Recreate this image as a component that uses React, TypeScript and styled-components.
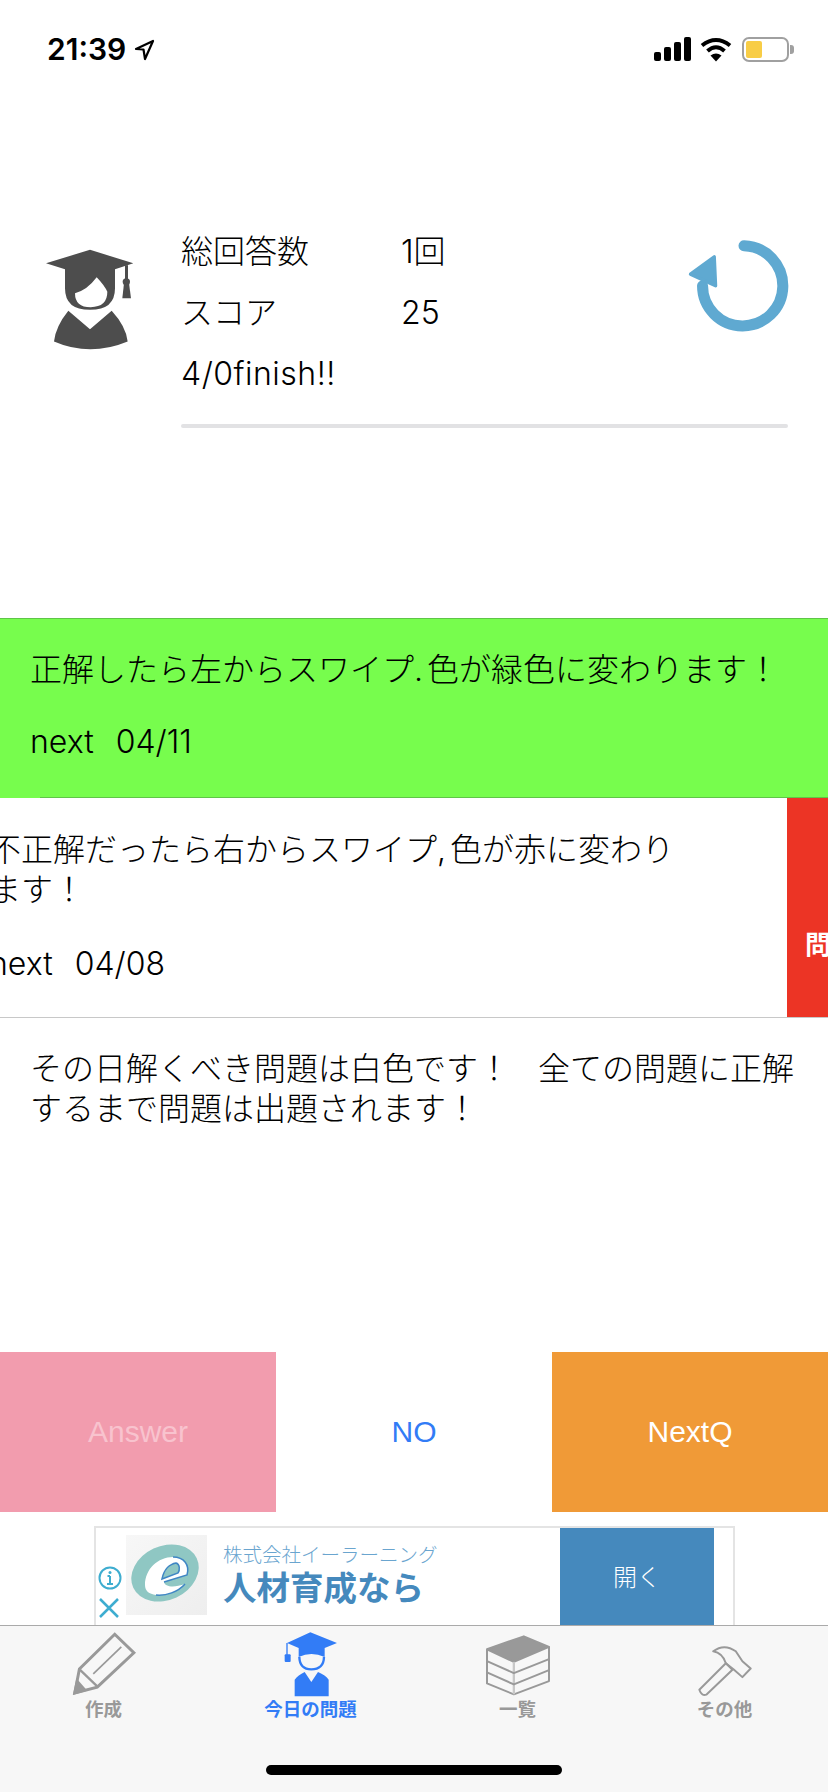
import React from 'react';
import styled, { createGlobalStyle } from 'styled-components';

const GlobalStyle = createGlobalStyle`
  html, body {
    margin: 0;
    padding: 0;
    background: #fff;
  }
  * {
    box-sizing: border-box;
  }
`;

const Screen = styled.div`
  width: 828px;
  height: 1792px;
  display: flex;
  flex-direction: column;
  overflow: hidden;
  background: #fff;
  color: #000;
  font-family: "Liberation Sans", "Noto Sans CJK JP", sans-serif;
`;

/* status bar */
const StatusBar = styled.div`
  height: 100px;
  flex: none;
  padding: 37px 39px 0 47px;
  display: flex;
  align-items: flex-start;
`;

const Clock = styled.div`
  font-family: Inter, "Liberation Sans", sans-serif;
  font-size: 30px;
  line-height: 25px;
  font-weight: 600;
`;

const LocationArrow = styled.svg`
  width: 21px;
  height: 22px;
  margin: 2px 0 0 8px;
`;

const StatusIcons = styled.div`
  margin-left: auto;
  display: flex;
  align-items: flex-start;
`;

const Battery = styled.div`
  position: relative;
  width: 47px;
  height: 25px;
  margin-left: 10px;
  border: 2px solid #a0a0a0;
  border-radius: 7px;
  padding: 2px;

  &::after {
    content: '';
    position: absolute;
    right: -7px;
    top: 6px;
    width: 4px;
    height: 9px;
    border-radius: 0 3px 3px 0;
    background: #a0a0a0;
  }
`;

const BatteryLevel = styled.div`
  width: 16px;
  height: 100%;
  border-radius: 2px;
  background: #f8cd46;
`;

/* summary */
const Summary = styled.section`
  flex: none;
  margin-top: 120px;
  height: 208px;
  padding-left: 45px;
  display: flex;
  align-items: flex-start;
`;

const AvatarBox = styled.div`
  width: 136px;
  flex: none;
  padding-top: 28px;
`;

const StatsColumn = styled.div`
  width: 607px;
  flex: none;
`;

const StatsHead = styled.div`
  height: 204px;
  position: relative;
  padding-top: 1px;
`;

const StatRow = styled.div<{ $spaced?: boolean }>`
  height: 61px;
  display: flex;
  align-items: center;
  font-family: Inter, "Noto Sans CJK JP", sans-serif;
  font-size: 32px;
  line-height: 40px;
  font-weight: 300;
  letter-spacing: ${props => (props.$spaced ? '0.5px' : '0')};
`;

const StatLabel = styled.div`
  width: 220px;
`;

const ReloadIcon = styled.svg`
  position: absolute;
  right: -3px;
  top: 19px;
  width: 104px;
  height: 97px;
`;

const Divider = styled.div`
  height: 4px;
  border-radius: 2px;
  background: #e2e2e4;
`;

/* question list */
const List = styled.section`
  flex: 1;
  margin-top: 190px;
  display: flex;
  flex-direction: column;
`;

const GreenRow = styled.div`
  position: relative;
  flex: none;
  background: #77fd4d;
  border-top: 1px solid #5fc548;
  padding: 31px 30px 36px;

  &::after {
    content: '';
    position: absolute;
    left: 40px;
    right: 0;
    bottom: 0;
    height: 1px;
    background: #5fc548;
  }
`;

const SwipedRow = styled.div`
  flex: none;
  display: flex;
  overflow: hidden;
  border-bottom: 1px solid #c8c8c8;
`;

const SwipedContent = styled.div`
  width: 828px;
  flex: none;
  margin-left: -41px;
  padding: 32px 100px 33px 30px;
`;

const DeleteAction = styled.div`
  width: 41px;
  flex: none;
  background: #ec3425;
  color: #fff;
  font-size: 26px;
  font-weight: 700;
  line-height: 30px;
  white-space: nowrap;
  overflow: hidden;
  padding: 132px 0 0 18px;
`;

const PlainRow = styled.div`
  flex: 1;
  padding: 31px 20px 0 30px;
`;

const RowText = styled.div`
  font-family: Inter, "Noto Sans CJK JP", sans-serif;
  font-size: 32px;
  line-height: 40px;
  font-weight: 300;
  word-spacing: -5px;
`;

const WideSpace = styled.span`
  letter-spacing: -4px;
`;

const NextDate = styled.div<{ $gap?: number }>`
  margin-top: ${props => props.$gap ?? 32}px;
  font-family: Inter, "Noto Sans CJK JP", sans-serif;
  font-size: 32px;
  line-height: 40px;
  font-weight: 300;
  word-spacing: 2px;
  white-space: pre;
`;

/* answer buttons */
const ButtonBar = styled.div`
  flex: none;
  height: 160px;
  display: grid;
  grid-template-columns: repeat(3, 1fr);
`;

const ActionButton = styled.button<{ $bg: string; $fg: string }>`
  border: none;
  margin: 0;
  padding: 0;
  background: ${props => props.$bg};
  color: ${props => props.$fg};
  font-family: inherit;
  font-size: 30px;
  font-weight: 300;
`;

/* ad banner */
const AdBanner = styled.div`
  flex: none;
  width: 641px;
  height: 99px;
  margin: 14px 0 0 94px;
  border: 2px solid #e4e4e4;
  border-bottom: none;
  display: flex;
  align-items: stretch;
`;

const AdControls = styled.div`
  width: 30px;
  flex: none;
  padding: 38px 0 0 2px;
  display: flex;
  flex-direction: column;
  gap: 8px;
`;

const AdLogo = styled.div`
  width: 81px;
  height: 80px;
  flex: none;
  margin-top: 7px;
  background: linear-gradient(135deg, #f7f7f7, #eeeeee);
`;

const AdCopy = styled.div`
  flex: 1;
  padding: 15px 0 0 16px;
`;

const AdCompany = styled.div`
  font-size: 19.5px;
  line-height: 24px;
  font-weight: 300;
  color: #6aa5cf;
  white-space: nowrap;
`;

const AdHeadline = styled.div`
  margin-top: 2px;
  font-size: 33.5px;
  line-height: 40px;
  font-weight: 700;
  color: #4589bd;
  white-space: nowrap;
`;

const AdButton = styled.div`
  width: 154px;
  flex: none;
  margin-right: 19px;
  padding-bottom: 3px;
  background: #4589bd;
  color: #fff;
  font-size: 24px;
  font-weight: 300;
  display: flex;
  align-items: center;
  justify-content: center;
`;

/* tab bar */
const TabBar = styled.nav`
  position: relative;
  flex: none;
  height: 167px;
  background: #f7f7f7;
  border-top: 1px solid #aaaaaa;
  padding-top: 4px;
  display: grid;
  grid-template-columns: repeat(4, 207px);
  align-items: start;
`;

const TabItem = styled.div<{ $active?: boolean }>`
  display: flex;
  flex-direction: column;
  align-items: center;
  color: ${props => (props.$active ? '#327cf6' : '#999999')};
`;

const TabIconBox = styled.div`
  height: 67px;
  display: flex;
  align-items: flex-end;
  justify-content: center;
`;

const TabLabel = styled.div`
  margin-top: 2px;
  font-size: 18.5px;
  line-height: 22px;
  font-weight: 700;
`;

const HomeIndicator = styled.div`
  position: absolute;
  left: 266px;
  bottom: 17px;
  width: 296px;
  height: 10px;
  border-radius: 5px;
  background: #000;
`;

const tabs = [
  {
    label: '作成',
    box: '210 62 205 200',
    width: 68,
    height: 66,
    art: (
      <g fill="none" stroke="currentColor" strokeWidth="9">
        <path d="M345 72 L403 128 L292 232 L224 250 L238 177 Z" strokeLinejoin="miter" />
        <path d="M280 192 L365 110" strokeWidth="5" />
        <path d="M240 180 L292 230" strokeWidth="7" />
        <path d="M218 256 L229 205 L262 243 Z" fill="currentColor" stroke="none" />
      </g>
    ),
  },
  {
    label: '今日の問題',
    active: true,
    box: '850 62 165 198',
    width: 55,
    height: 66,
    art: (
      <g fill="currentColor">
        <path d="M862 98 L932 66 L1012 98 L975 113 L975 140 Q935 122 897 140 L897 113 Z" />
        <path d="M862 98 L862 135" stroke="currentColor" strokeWidth="4" />
        <rect x="855" y="132" width="18" height="23" rx="3" />
        <path d="M899 140 Q900 177 935 177 Q972 177 973 140" fill="none" stroke="currentColor" strokeWidth="7" />
        <path d="M885 258 L885 208 Q895 195 915 185 L935 215 L955 185 Q978 195 987 208 L987 258 Z" />
      </g>
    ),
  },
  {
    label: '一覧',
    box: '210 66 205 190',
    width: 68,
    height: 63,
    art: (
      <g fill="none" stroke="currentColor" strokeWidth="6" strokeLinejoin="round">
        <path d="M219 112 L330 73 L406 105 L300 150 Z" fill="currentColor" />
        <path d="M219 112 L219 215 L300 248 L406 208 L406 105" />
        <path d="M300 150 L300 248" stroke="#c8c8c8" strokeWidth="7" />
        <path d="M219 148 L300 184 L406 142" />
        <path d="M219 182 L300 218 L406 175" />
      </g>
    ),
  },
  {
    label: 'その他',
    box: '845 108 175 160',
    width: 58,
    height: 53,
    art: (
      <g fill="none" stroke="currentColor" strokeWidth="6" strokeLinejoin="round">
        <path d="M855 246 L935 166 L955 186 L876 261 Q862 266 855 246 Z" />
        <path d="M897 130 Q930 105 965 130 L985 160 L1010 182 L985 208 L958 184 L935 166 Q925 135 897 130 Z" />
      </g>
    ),
  },
];

const App: React.FC = () => {
  return (
    <Screen>
      <GlobalStyle />
      <StatusBar>
        <Clock>21:39</Clock>
        <LocationArrow viewBox="0 0 21 22">
          <path d="M2 10 L19 2 L11 20 L9.500 10.500 Z" fill="none" stroke="#000" strokeWidth="2.200" strokeLinejoin="round" />
        </LocationArrow>
        <StatusIcons>
          <svg width="37" height="24" viewBox="0 0 37 24" fill="#000">
            <rect x="0" y="15" width="7" height="9" rx="2" />
            <rect x="10" y="10" width="7" height="14" rx="2" />
            <rect x="20" y="5" width="7" height="19" rx="2" />
            <rect x="30" y="0" width="7" height="24" rx="2" />
          </svg>
          <svg width="32" height="25" viewBox="0 0 32 25" style={{ marginLeft: 9 }} fill="none" stroke="#000" strokeWidth="4">
            <path d="M2 8.500 Q16 -2.500 30 8.500" />
            <path d="M7.500 14 Q16 6.500 24.500 14" />
            <path d="M16 24.500 L10.500 18.500 Q16 14.500 21.500 18.500 Z" fill="#000" stroke="none" />
          </svg>
          <Battery>
            <BatteryLevel />
          </Battery>
        </StatusIcons>
      </StatusBar>

      <Summary>
        <AvatarBox>
          <svg width="90" height="102" viewBox="45 55 270 305" fill="#4d4d4d">
            <path d="M48 100 L180 60 L310 100 L255 118 L255 175 Q255 240 180 240 Q105 240 105 175 L105 118 Z" />
            <path d="M135 190 Q172 180 200 142 Q225 168 232 186 Q232 232 182 232 Q135 232 135 190 Z" fill="#fff" />
            <path d="M115 243 L180 298 L245 243 Q288 290 293 335 Q180 382 72 335 Q77 290 115 243 Z" />
            <rect x="285" y="106" width="9" height="50" />
            <circle cx="289" cy="156" r="11" />
            <path d="M282 160 L297 160 L303 205 L277 205 Z" />
          </svg>
        </AvatarBox>
        <StatsColumn>
          <StatsHead>
            <StatRow>
              <StatLabel>総回答数</StatLabel>
              <div>1回</div>
            </StatRow>
            <StatRow>
              <StatLabel>スコア</StatLabel>
              <div>25</div>
            </StatRow>
            <StatRow $spaced>4/0finish!!</StatRow>
            <ReloadIcon viewBox="50 40 310 290">
              <path d="M220 60 A120 120 0 1 1 96 180" fill="none" stroke="#5fa9d1" strokeWidth="33" strokeLinecap="round" />
              <path d="M60 145 L131 93 L135 180 Z" fill="#5fa9d1" stroke="#5fa9d1" strokeWidth="10" strokeLinejoin="round" />
            </ReloadIcon>
          </StatsHead>
          <Divider />
        </StatsColumn>
      </Summary>

      <List>
        <GreenRow>
          <RowText>正解したら左からスワイプ. 色が緑色に変わります！</RowText>
          <NextDate>next  04/11</NextDate>
        </GreenRow>
        <SwipedRow>
          <SwipedContent>
            <RowText>不正解だったら右からスワイプ, 色が赤に変わります！</RowText>
            <NextDate $gap={34}>next  04/08</NextDate>
          </SwipedContent>
          <DeleteAction>問題</DeleteAction>
        </SwipedRow>
        <PlainRow>
          <RowText>その日解くべき問題は白色です！<WideSpace>　</WideSpace>全ての問題に正解するまで問題は出題されます！</RowText>
        </PlainRow>
      </List>

      <ButtonBar>
        <ActionButton $bg="#f29cae" $fg="#f8c3ce">Answer</ActionButton>
        <ActionButton $bg="#ffffff" $fg="#327cf6">NO</ActionButton>
        <ActionButton $bg="#f09a37" $fg="#ffffff">NextQ</ActionButton>
      </ButtonBar>

      <AdBanner>
        <AdControls>
          <svg width="24" height="24" viewBox="0 0 24 24" fill="none" stroke="#3eadd0" strokeWidth="2">
            <circle cx="12" cy="12" r="10.500" />
            <path d="M12 10 L12 18 M9 18 L15 18 M9.500 10 L12 10" />
            <circle cx="12" cy="6.500" r="1.500" fill="#3eadd0" stroke="none" />
          </svg>
          <svg width="22" height="20" viewBox="0 0 22 20" stroke="#3eadd0" strokeWidth="2.500">
            <path d="M2 1 L20 19 M20 1 L2 19" />
          </svg>
        </AdControls>
        <AdLogo>
          <svg width="81" height="80" viewBox="0 0 81 80">
            <ellipse cx="39" cy="38" rx="35" ry="27" transform="rotate(-25 39 38)" fill="#8fc7c3" />
            <path d="M19 50 C19 34 32 22 47 22 C58 22 64 30 61 40 L38 47 C39 52 48 53 59 49 C52 57 40 61 30 60 C23 59 19 56 19 50 Z" fill="#fff" />
            <path d="M47 22 C58 22 64 30 61 40 L38 47" fill="none" stroke="#3f86c4" strokeWidth="1.500" />
            <path d="M59 49 C52 57 40 61 30 60" fill="none" stroke="#3f86c4" strokeWidth="1.500" />
            <path d="M36 44 C38 34 44 29 50 28 C54 29 54 35 52 38 Z" fill="#8fc7c3" stroke="#3f86c4" strokeWidth="1.500" />
          </svg>
        </AdLogo>
        <AdCopy>
          <AdCompany>株式会社イーラーニング</AdCompany>
          <AdHeadline>人材育成なら</AdHeadline>
        </AdCopy>
        <AdButton>開く</AdButton>
      </AdBanner>

      <TabBar>
        {tabs.map(tab => (
          <TabItem key={tab.label} $active={tab.active}>
            <TabIconBox>
              <svg width={tab.width} height={tab.height} viewBox={tab.box}>
                {tab.art}
              </svg>
            </TabIconBox>
            <TabLabel>{tab.label}</TabLabel>
          </TabItem>
        ))}
        <HomeIndicator />
      </TabBar>
    </Screen>
  );
};

export default App;
